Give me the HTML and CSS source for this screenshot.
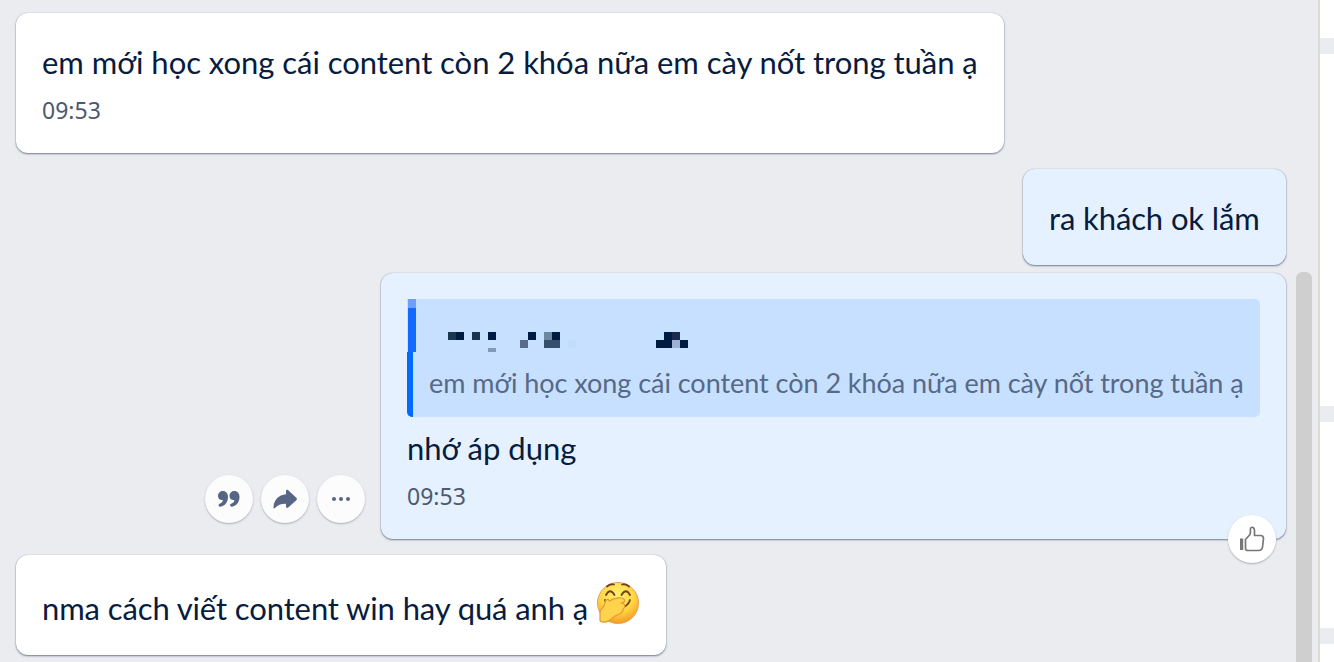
FILE: index.html
```html
<!DOCTYPE html>
<html lang="vi">
<head>
    <meta charset="UTF-8">
    <meta name="viewport" content="width=device-width, initial-scale=1.0">
    <title>Chat</title>
    <link rel="stylesheet" href="styles.css">
</head>
<body>
    <div class="app">
        <main class="chat">
            <div class="message first">
                <p class="text long">em mới học xong cái content còn 2 khóa nữa em cày nốt trong tuần ạ</p>
                <span class="time">09:53</span>
            </div>
            <div class="message mine short">
                <p class="text ok">ra khách ok lắm</p>
            </div>
            <div class="row">
                <div class="actions">
                    <button class="round">
                        <svg width="24" height="24" viewBox="0 0 24 24" fill="#566583">
                            <path d="M6 4C3.200 4 1 6 1 9C1 11.400 2.700 13 5 13C5.800 13 6 13.200 5.700 14C5.200 15.400 4 16.200 2.600 16.800C.9 17.600 1.500 20 3.500 19.700C8 19 11 15 11 10C11 6.400 8.900 4 6 4Z"/>
                            <path transform="translate(11.500 0)" d="M6 4C3.200 4 1 6 1 9C1 11.400 2.700 13 5 13C5.800 13 6 13.200 5.700 14C5.200 15.400 4 16.200 2.600 16.800C.9 17.600 1.500 20 3.500 19.700C8 19 11 15 11 10C11 6.400 8.900 4 6 4Z"/>
                        </svg>
                    </button>
                    <button class="round">
                        <svg width="24" height="24" viewBox="0 0 24 24" fill="#566583">
                            <path d="M13 4.200C13 2.800 14.300 2.400 15.200 3.300L23.300 10.700Q24.600 12 23.300 13.200L15.200 20.500C14.200 21.400 13 20.800 13 19.500V16.700C8 16.600 4.500 18 1.900 21Q.6 22 .5 20.500C.7 13 5.700 8 13 7.300Z"/>
                        </svg>
                    </button>
                    <button class="round">
                        <svg width="24" height="24" viewBox="0 0 24 24" fill="#566583">
                            <circle cx="5" cy="12" r="2"/>
                            <circle cx="12" cy="12" r="2"/>
                            <circle cx="19" cy="12" r="2"/>
                        </svg>
                    </button>
                </div>
                <div class="message mine reply">
                    <div class="quote">
                        <svg class="name" width="260" height="53" viewBox="0 0 260 53" shape-rendering="crispEdges">
                            <path fill="#c7e0ff" d="M0 0h9v53H0z"/>
                            <path fill="#6d9fff" d="M1 0h8v9H1z"/>
                            <path fill="#126aff" d="M1 9h8v44H1z"/>
                            <path fill="#1a3653" d="M41 33h8v8h-8z"/>
                            <path fill="#001b40" d="M49 33h8v8h-8zM81 33h8v8h-8zM121 33h8v8h-8zM145 33h8v8h-8zM257 33h8v8h-8z"/>
                            <path fill="#1b3054" d="M65 33h8v8h-8z"/>
                            <path fill="#8099b8" d="M81 49h8v4h-8z"/>
                            <path fill="#586b89" d="M113 41h8v8h-8z"/>
                            <path fill="#6e88a2" d="M137 33h8v8h-8z"/>
                            <path fill="#364d6b" d="M137 41h16v8h-16z"/>
                            <path fill="#c0ddfb" d="M161 41h8v8h-8z"/>
                            <path fill="#001b40" d="M249 41h16v8h-16zM273 41h8v8h-8z"/>
                            <path fill="#1b2b50" d="M265 33h8v8h-8z"/>
                            <path fill="#9fb2d3" d="M265 41h8v8h-8z"/>
                        </svg>
                        <p class="quote-text">em mới học xong cái content còn 2 khóa nữa em cày nốt trong tuần ạ</p>
                    </div>
                    <p class="text reply-text">nhớ áp dụng</p>
                    <span class="time">09:53</span>
                    <button class="round like">
                        <svg width="28" height="28" viewBox="0 0 28 28">
                            <path d="M2 13.500h3.200v11.500H2z" fill="#777"/>
                            <path d="M7.500 23V14.500L12 9.500C13 7.500 12 5 12.500 3.500C13 1.500 16.500 1.800 16.500 5.500V10.500H22.500Q25.500 10.500 25.500 13.500L24.500 22Q24 25.500 20.500 25.500H9.500Q7.500 25.500 7.500 23Z" fill="none" stroke="#777" stroke-width="1.700" stroke-linejoin="round"/>
                        </svg>
                    </button>
                </div>
            </div>
            <div class="message last">
                <p class="text win">nma cách viết content win hay quá anh ạ</p>
                <svg class="emoji" width="44" height="44" viewBox="0 0 44 44">
                    <defs>
                        <radialGradient id="face" cx=".48" cy=".3" r=".7">
                            <stop offset="0" stop-color="#fff06d"/>
                            <stop offset=".6" stop-color="#ffd645"/>
                            <stop offset="1" stop-color="#f59c24"/>
                        </radialGradient>
                    </defs>
                    <circle cx="22" cy="22" r="20.500" fill="url(#face)" stroke="#eda05b"/>
                    <g fill="none" stroke="#76401e" stroke-width="1.800" stroke-linecap="round">
                        <path d="M11 5.500Q14 2.500 18 3.500M26 3.500Q30 2.500 33 5.500"/>
                        <path d="M10 14Q14 6.500 18.500 14M25.500 14Q30 6.500 34 14"/>
                        <path d="M9 19Q9 21 11 22M34 19Q32 25 27 26"/>
                    </g>
                    <path d="M4 40V31C4 28 9 26 9 22C9 19 12 17 13.500 20C18 17 27 15 28.500 19C29 21 27 22 25 22C29 22 30 26 27 28C28 32 22 34 19 35C15 39 9 43 4 40Z" fill="#ffd34b" stroke="#e09a35" stroke-width="1.200" stroke-linejoin="round"/>
                </svg>
            </div>
            <div class="scrollbar"></div>
        </main>
        <aside class="side">
            <div class="panel one"></div>
            <div class="panel two"></div>
            <div class="panel three"></div>
            <div class="panel four"></div>
        </aside>
    </div>
</body>
</html>
```

FILE: styles.css
```css
* {
    box-sizing: border-box;
}
body {
    margin: 0;
    background-color: #ebecf0;
    color: #071c3e;
    font-family: Lato, "Noto Sans", sans-serif;
    overflow: hidden;
}
p {
    margin: 0;
    white-space: nowrap;
}
svg {
    display: block;
}
.app {
    display: flex;
    height: 662px;
}
.chat {
    position: relative;
    width: 1318px;
    padding: 13px 32px 0 16px;
    display: flex;
    flex-direction: column;
    align-items: flex-start;
}
.message {
    position: relative;
    flex-shrink: 0;
    padding: 28px 26px 0;
    background-color: #fff;
    border-radius: 12px;
    box-shadow: 0 1px 2px #6e7c93, 0 0 1px #9aa5b6;
}
.mine {
    background-color: #e5f1ff;
}
.first {
    width: 988px;
    height: 140px;
}
.short {
    width: 263px;
    height: 96px;
    margin-top: 16px;
    align-self: flex-end;
}
.text {
    font-size: 31px;
    line-height: 42px;
}
.long {
    letter-spacing: -0.04px;
}
.ok, .win {
    letter-spacing: -0.11px;
}
.time {
    display: block;
    margin-top: 12px;
    color: #4c596f;
    font-family: "Noto Sans", sans-serif;
    font-size: 23px;
    line-height: 30px;
}
.row {
    display: flex;
    align-self: flex-end;
    align-items: flex-end;
    gap: 16px;
    margin-top: 8px;
}
.actions {
    display: flex;
    gap: 8px;
    padding-bottom: 16px;
}
.round {
    display: flex;
    align-items: center;
    justify-content: center;
    width: 48px;
    height: 48px;
    padding: 0;
    border: none;
    border-radius: 50%;
    background-color: #fcfcfd;
    box-shadow: 0 1px 2px #a8adb8;
}
.reply {
    width: 905px;
    height: 266px;
    padding-top: 26px;
}
.quote {
    width: 853px;
    height: 118px;
    border-radius: 5px;
    border-left: 6px solid #006bff;
    background-color: #c7e0ff;
}
.name {
    margin-left: -6px;
    overflow: visible;
}
.quote-text {
    padding: 12px 0 0 16px;
    color: #566987;
    font-size: 27px;
    line-height: 38px;
    letter-spacing: -0.04px;
}
.reply-text {
    margin-top: 10px;
}
.reply .time {
    margin-top: 12px;
}
.like {
    position: absolute;
    right: 10px;
    bottom: -24px;
    background-color: #fff;
}
.last {
    display: flex;
    width: 650px;
    height: 100px;
    margin-top: 16px;
    padding-top: 26px;
}
.last .text {
    padding-top: 6px;
}
.emoji {
    position: absolute;
    left: 580px;
    top: 26px;
}
.scrollbar {
    position: absolute;
    top: 272px;
    right: 6px;
    bottom: 0;
    width: 16px;
    border-radius: 6px 6px 0 0;
    background-color: #cfcfd0;
}
.side {
    display: flex;
    flex-direction: column;
    gap: 16px;
    width: 16px;
    border-left: 2px solid #dcdcd6;
}
.panel {
    flex-shrink: 0;
    background-color: #fff;
}
.one {
    height: 38px;
}
.two {
    height: 352px;
}
.three {
    height: 206px;
}
.four {
    height: 18px;
}
```
